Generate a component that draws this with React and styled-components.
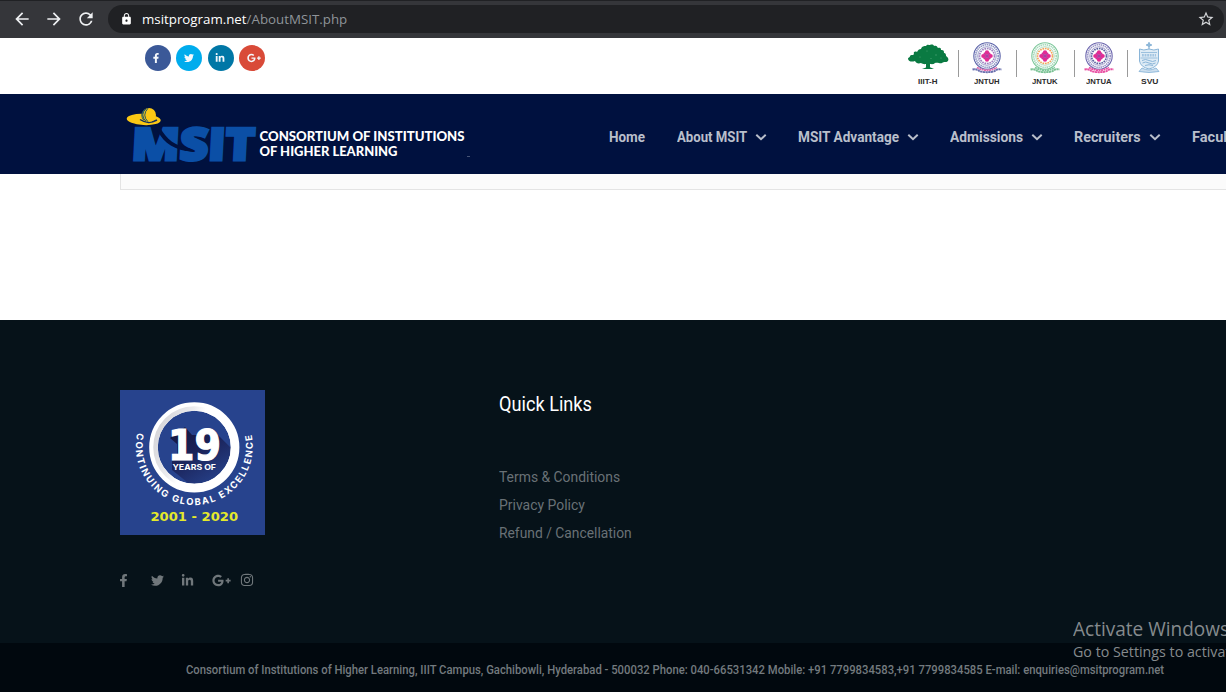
import React, { useLayoutEffect, useRef, useState } from 'react';
import styled, { createGlobalStyle } from 'styled-components';
import { FaFacebookF, FaTwitter, FaLinkedinIn, FaGooglePlusG, FaInstagram } from 'react-icons/fa';
import { MdArrowBack, MdArrowForward, MdRefresh, MdLock, MdStarBorder } from 'react-icons/md';

const GlobalStyle = createGlobalStyle`
  * { box-sizing: border-box; }
  html, body { margin: 0; overflow: hidden; }
  body { font-family: Roboto, "Liberation Sans", sans-serif; background: #fff; }
`;

const Page = styled.div`
  position: relative;
  display: flex;
  flex-direction: column;
  width: 1226px;
  height: 692px;
  overflow: hidden;
`;

/* Text set to a given measure, condensed or widened horizontally. */
const FitBox = styled.span`
  display: inline-block;
  flex: none;
  width: ${(p) => p.$w}px;
  white-space: nowrap;
`;
const FitInner = styled.span`
  display: inline-block;
  transform-origin: 0 50%;
`;
function Fit({ w, children }) {
  const ref = useRef(null);
  const [scale, setScale] = useState(1);
  useLayoutEffect(() => {
    const natural = ref.current.offsetWidth;
    if (natural) setScale(w / natural);
  }, [w]);
  return (
    <FitBox $w={w}>
      <FitInner ref={ref} style={{ transform: `scaleX(${scale})` }}>{children}</FitInner>
    </FitBox>
  );
}

/* Browser toolbar */
const Toolbar = styled.div`
  flex: none;
  display: flex;
  align-items: center;
  height: 38px;
  padding: 0 2px 1px 12px;
  background: #35363a;
  border-top: 1px solid #202124;
  color: #eef0f2;
`;
const ToolButton = styled.span`
  display: flex;
  width: 20px;
  margin-right: 12px;
  svg { width: 20px; height: 20px; }
`;
const AddressBar = styled.div`
  flex: 1;
  display: flex;
  align-items: center;
  height: 28px;
  padding: 0 9px 0 12px;
  border-radius: 14px;
  background: #202124;
  font: 13.5px/20px "Open Sans", "Noto Sans", sans-serif;
  color: #fff;
`;
const LockIcon = styled(MdLock)`
  width: 13px;
  height: 14px;
  margin: 0 9px 1px 0;
`;
const UrlPath = styled.span`
  color: #8f9499;
`;
const Star = styled(MdStarBorder)`
  width: 18px;
  height: 18px;
  margin-left: auto;
  color: #d4d6d9;
`;

/* Top strip */
const TopStrip = styled.div`
  flex: none;
  display: flex;
  justify-content: space-between;
  height: 56px;
  padding: 0 56px 0 145px;
`;
const SocialRow = styled.div`
  display: flex;
  gap: 5.4px;
  padding-top: 7px;
`;
const SocialDot = styled.span`
  display: flex;
  align-items: center;
  justify-content: center;
  width: 26px;
  height: 26px;
  padding: 0 ${(p) => p.$right || 0}px 0 ${(p) => p.$left || 0}px;
  border-radius: 50%;
  background: ${(p) => p.$bg};
  color: #f4f8fc;
  svg { display: block; width: ${(p) => p.$size}px; height: ${(p) => p.$size}px; }
`;
const Partners = styled.div`
  display: grid;
  grid-template-columns: 44px 15px 44px 14px 44px 10px 44px 7px 42px;
`;
const Partner = styled.div`
  display: flex;
  flex-direction: column;
  align-items: center;
  padding-top: 3px;
  font: bold 8px/9px "Liberation Sans", Arial, sans-serif;
  color: #2b2b2b;
  svg { display: block; width: 42px; height: 36px; }
`;
const Divider = styled.span`
  width: 1px;
  height: 27px;
  margin: 12px 0 0 ${(p) => p.$x}px;
  background: #9a9a9a;
`;

/* Navigation */
const Header = styled.header`
  flex: none;
  display: flex;
  height: 80px;
  padding-left: 120px;
  background: #00113f;
`;
const BrandSvg = styled.svg`
  flex: none;
  display: block;
  width: 360px;
  height: 80px;
`;
const Nav = styled.nav`
  display: flex;
  gap: 31px;
  height: 22px;
  margin: 32px 0 0 129px;
`;
const NavItem = styled.a`
  flex: none;
  display: flex;
  align-items: center;
  gap: 8px;
  font-size: 15.5px;
  line-height: 22px;
  font-weight: 700;
  color: #b9bfcb;
  svg { width: 12px; height: 12px; }
`;

/* Body */
const Content = styled.main`
  flex: none;
  height: 146px;
  padding-left: 120px;
`;
const PanelEnd = styled.div`
  height: 16px;
  background: #fbfbfb;
  border: solid #e4e4e4;
  border-width: 0 0 1px 1px;
`;

/* Footer */
const Footer = styled.footer`
  flex: none;
  display: flex;
  height: 323px;
  padding: 70px 0 0 120px;
  background: #061219;
`;
const AboutColumn = styled.div`
  width: 379px;
`;
const BadgeSvg = styled.svg`
  display: block;
  width: 145px;
  height: 145px;
`;
const FooterSocial = styled.div`
  display: grid;
  grid-template-columns: 34px 30px 31px 28px 14px;
  grid-template-rows: 14px;
  align-items: center;
  height: 14px;
  margin: 38px 0 0 -3px;
  color: #70777b;
  svg { display: block; }
`;
const LinksColumn = styled.div`
  color: #697176;
`;
const LinksTitle = styled.h3`
  margin: 0;
  font-size: 20.5px;
  line-height: 28px;
  font-weight: 400;
  color: #fff;
`;
const LinkList = styled.div`
  display: flex;
  flex-direction: column;
  margin-top: 45px;
`;
const FooterLink = styled.a`
  font-size: 15.5px;
  line-height: 28px;
  height: 28px;
`;
const Copyright = styled.div`
  flex: none;
  height: 49px;
  padding: 17px 0 0 185.5px;
  background: #01080e;
  font-size: 13px;
  line-height: 20px;
  font-weight: 500;
  color: #737a7e;
`;
const Watermark = styled.div`
  position: absolute;
  left: 1073px;
  top: 616px;
  font-family: "Open Sans", "Noto Sans", sans-serif;
  color: #858a8d;
  white-space: nowrap;
`;
const WatermarkTitle = styled.div`
  font-size: 19.5px;
  line-height: 26px;
`;
const WatermarkNote = styled.div`
  font-size: 14.5px;
  line-height: 20px;
`;

const Chevron = () => (
  <svg viewBox="0 0 12 12" fill="none" stroke="currentColor" strokeWidth="2">
    <path d="M1.300 3.800 6 8.200l4.700-4.400" />
  </svg>
);

const Tree = () => (
  <svg viewBox="0 0 42 36">
    <g fill="#0a7a42">
      <path d="M1 18c0-2 2-1 2-3 1-2 3 0 4-2-1-2 1-3 3-2 1-2 2-3 4-3 1-3 3-3 5-3 1-2 3-1 4-1 2-1 4 0 4 1 3-1 3 1 4 2 3-1 3 1 3 2 3 0 3 1 3 3 2 0 2 2 2 3 2 1 3 3 2 5-2 2-4 0-6 2-2 1-4-1-7 0-2 2-5 1-7 0-3 2-5 1-7 0-3 1-5 0-6-2-3 1-6 1-7-2Z" />
      <path d="m14 18 5 5v3.500l-4 1.500h12l-4-1.800V23l6-5h-7l-2 2-2-2Z" />
    </g>
    <g fill="#4aa273">
      <circle cx="13" cy="16" r=".6" /><circle cx="20" cy="10" r=".6" /><circle cx="29" cy="14" r=".7" />
      <circle cx="24" cy="17.500" r=".6" /><circle cx="34" cy="17" r=".6" />
    </g>
  </svg>
);

const Emblem = ({ outer, inner, band, ribbon }) => (
  <svg viewBox="0 0 42 36">
    <g fill="none">
      <circle cx="21" cy="15" r="13.200" stroke={outer} strokeWidth="1.100" />
      <circle cx="21" cy="15" r="11.300" stroke={outer} strokeWidth="1.700" strokeDasharray="1.400 .7" opacity=".7" />
      <circle cx="21" cy="15" r="9.300" stroke={outer} strokeWidth="1" opacity=".6" />
      <circle cx="21" cy="15" r="7.500" stroke={inner} strokeWidth="1.700" strokeDasharray="1.700 .8" opacity=".85" />
      <path d="M11 26.500q10 5.500 20 0" stroke={ribbon} strokeWidth="1.900" strokeDasharray="2 .5" />
      <path d="M6.500 28.500q4-1 7 1.700 7.500 2 15 0 3-2.700 7-1.700" stroke={band} strokeWidth="1.900" strokeDasharray="2.300 .4" />
    </g>
    <g fill="#e32b94">
      <circle cx="21" cy="11.300" r="2.100" /><circle cx="21" cy="18.700" r="2.100" />
      <circle cx="17.300" cy="15" r="2.100" /><circle cx="24.700" cy="15" r="2.100" />
      <circle cx="18.800" cy="12.800" r="1.300" /><circle cx="23.200" cy="12.800" r="1.300" />
      <circle cx="18.800" cy="17.200" r="1.300" /><circle cx="23.200" cy="17.200" r="1.300" />
    </g>
    <circle cx="21" cy="15" r="2.100" fill="#c32f98" />
    <path d="m18 12 6 6m0-6-6 6" stroke="#9b4ba8" strokeWidth=".7" />
  </svg>
);

const Crest = () => (
  <svg viewBox="0 0 42 36" fill="none" stroke="#8ab5d8">
    <path d="M21 1v7m-3-4h6" strokeWidth="1.300" />
    <circle cx="21" cy="4" r="1.500" strokeWidth="1" />
    <path d="M11.500 8q4 2 9.500 0 5 2 9.500 0v12q-1 6-9.500 8-8.500-2-9.500-8Z" fill="#deebf5" strokeWidth="1" />
    <path d="M13 11.500h16M12.500 17h17" strokeWidth=".8" />
    <path d="M14 14.300h14" strokeWidth="2.500" strokeDasharray="1.800 .8" opacity=".7" />
    <path d="M14 19.500q3.500-2 7 0t7 0M14.500 22q3-2 6.500 0t6.500 0M17 24.500q4-1.500 8 0" strokeWidth="1" />
    <path d="M11 30.500 14 27q7 4 14 0l3 3.500q-10 2-20 0Z" fill="#cddfee" strokeWidth=".9" />
  </svg>
);

const Brand = () => (
  <BrandSvg viewBox="0 0 360 80">
    <text
      transform="translate(11 66) skewX(-3)"
      fontFamily="Open Sans, sans-serif"
      fontWeight="800"
      fontSize="44.500"
      fill="#0b4fa6"
      stroke="#0b4fa6"
      strokeWidth="3"
      textLength="123"
      lengthAdjust="spacingAndGlyphs"
    >
      MSIT
    </text>
    <path d="M36 33c5 13 14 21 30 24l4-2.500c-14-2-24-9-30-21.500Z" fill="#00113f" />
    <ellipse cx="23.700" cy="25.500" rx="17" ry="5.600" fill="#fbc814" transform="rotate(3 23.700 25.500)" />
    <path d="M20 25.500q8 5.500 17 .5" fill="none" stroke="#17305a" strokeWidth="1.500" />
    <circle cx="29" cy="21" r="7" fill="#fbc814" />
    <g fill="none" stroke="#1d5468" strokeWidth="1">
      <path d="M26 14.700q-6.500 6 0 12.800M28 14.200q-6.500 7 0 13.600M24.200 15.700q-4.500 5-.5 10.500" />
    </g>
    <g fontFamily="Lato, sans-serif" fontWeight="900" fontSize="12.500" fill="#fff">
      <text x="139.500" y="46.600" textLength="205" lengthAdjust="spacingAndGlyphs">CONSORTIUM OF INSTITUTIONS</text>
      <text x="139.500" y="62.200" textLength="138" lengthAdjust="spacingAndGlyphs">OF HIGHER LEARNING</text>
    </g>
    <path d="M347 62.500h3" stroke="#64708c" strokeWidth=".7" />
  </BrandSvg>
);

const Badge = () => (
  <BadgeSvg viewBox="0 0 145 145">
    <defs>
      <linearGradient id="ring" x1="0" y1=".2" x2="1" y2=".6">
        <stop offset="0" stopColor="#d4d4d8" />
        <stop offset=".35" stopColor="#ebebee" />
        <stop offset=".5" stopColor="#fff" />
      </linearGradient>
      <linearGradient id="shade" x1=".1" y1="0" x2=".75" y2="1">
        <stop offset="0" stopColor="#15183f" />
        <stop offset=".4" stopColor="#1a2156" />
        <stop offset="1" stopColor="#27438d" />
      </linearGradient>
      <clipPath id="disc"><circle cx="74.300" cy="57.300" r="37" /></clipPath>
      <path id="arc" d="M17.400 43A58.500 58.500 0 1 0 131.200 43" />
    </defs>
    <path d="M0 0h145v145H0Z" fill="#27438d" />
    <path d="M50 48 65 37l7 8 12 0 10-4 18 18v8L90 96H72L52 80v-9l5-2V54Z" fill="url(#shade)" clipPath="url(#disc)" />
    <circle cx="74.300" cy="57.300" r="40.800" fill="none" stroke="#fff" strokeWidth="8.600" />
    <circle cx="74.300" cy="57.300" r="38.800" fill="none" stroke="url(#ring)" strokeWidth="4.500" />
    <g fill="#fff">
      <text x="48" y="70" fontFamily="DejaVu Sans, sans-serif" fontWeight="700" fontSize="42" textLength="53" lengthAdjust="spacingAndGlyphs" stroke="#fff" strokeWidth="1.200">19</text>
      <text x="52.500" y="80" fontFamily="Inter, sans-serif" fontWeight="700" fontSize="8" textLength="43.500" lengthAdjust="spacingAndGlyphs">YEARS OF</text>
      <text fontFamily="Inter, sans-serif" fontWeight="700" fontSize="9.400">
        <textPath href="#arc" textLength="209" lengthAdjust="spacing">CONTINUING GLOBAL EXCELLENCE</textPath>
      </text>
    </g>
    <text x="30.500" y="131" fontFamily="DejaVu Sans, sans-serif" fontWeight="700" fontSize="13" fill="#e4e92b" textLength="87.500" lengthAdjust="spacingAndGlyphs">2001 - 2020</text>
  </BadgeSvg>
);

const navItems = [
  { label: 'Home', w: 36.5 },
  { label: 'About MSIT', w: 70.5, menu: true },
  { label: 'MSIT Advantage', w: 101, menu: true },
  { label: 'Admissions', w: 73, menu: true },
  { label: 'Recruiters', w: 66.5, menu: true },
  { label: 'Faculty', w: 47 },
];

const footerLinks = [
  { label: 'Terms & Conditions', w: 121 },
  { label: 'Privacy Policy', w: 85.5 },
  { label: 'Refund / Cancellation', w: 133 },
];

export default function App() {
  return (
    <Page>
      <GlobalStyle />
      <Toolbar>
        <ToolButton><MdArrowBack /></ToolButton>
        <ToolButton><MdArrowForward /></ToolButton>
        <ToolButton><MdRefresh /></ToolButton>
        <AddressBar>
          <LockIcon />
          <Fit w={205}>msitprogram.net<UrlPath>/AboutMSIT.php</UrlPath></Fit>
          <Star />
        </AddressBar>
      </Toolbar>

      <TopStrip>
        <SocialRow>
          <SocialDot $bg="#3b5998" $size={10} $right={5}><FaFacebookF /></SocialDot>
          <SocialDot $bg="#00aced" $size={10} $right={1}><FaTwitter /></SocialDot>
          <SocialDot $bg="#0077a6" $size={10} $right={2}><FaLinkedinIn /></SocialDot>
          <SocialDot $bg="#d94a38" $size={14} $left={3}><FaGooglePlusG /></SocialDot>
        </SocialRow>
        <Partners>
          <Partner><Tree /><Fit w={20}>IIIT-H</Fit></Partner>
          <Divider $x={8} />
          <Partner><Emblem outer="#5a62a8" inner="#8d6bb5" band="#6a6fae" ribbon="#e067ac" /><Fit w={26}>JNTUH</Fit></Partner>
          <Divider $x={7} />
          <Partner><Emblem outer="#7cc79a" inner="#f0953f" band="#79c193" ribbon="#7cc79a" /><Fit w={26}>JNTUK</Fit></Partner>
          <Divider $x={7} />
          <Partner><Emblem outer="#6b65ad" inner="#40478f" band="#e84fa2" ribbon="#e84fa2" /><Fit w={26}>JNTUA</Fit></Partner>
          <Divider $x={6} />
          <Partner><Crest /><Fit w={17}>SVU</Fit></Partner>
        </Partners>
      </TopStrip>

      <Header>
        <Brand />
        <Nav>
          {navItems.map((n) => (
            <NavItem key={n.label}>
              <Fit w={n.w}>{n.label}</Fit>
              {n.menu && <Chevron />}
            </NavItem>
          ))}
        </Nav>
      </Header>

      <Content><PanelEnd /></Content>

      <Footer>
        <AboutColumn>
          <Badge />
          <FooterSocial>
            <FaFacebookF size={13} />
            <FaTwitter size={13} />
            <FaLinkedinIn size={13} />
            <FaGooglePlusG size={19} />
            <FaInstagram size={14} />
          </FooterSocial>
        </AboutColumn>
        <LinksColumn>
          <LinksTitle><Fit w={93}>Quick Links</Fit></LinksTitle>
          <LinkList>
            {footerLinks.map((l) => (
              <FooterLink key={l.label}><Fit w={l.w}>{l.label}</Fit></FooterLink>
            ))}
          </LinkList>
        </LinksColumn>
      </Footer>
      <Copyright>
        <Fit w={978}>
          Consortium of Institutions of Higher Learning, IIIT Campus, Gachibowli, Hyderabad - 500032 Phone: 040-66531342 Mobile: +91 7799834583,+91 7799834585 E-mail: enquiries@msitprogram.net
        </Fit>
      </Copyright>

      <Watermark>
        <WatermarkTitle><Fit w={156}>Activate Windows</Fit></WatermarkTitle>
        <WatermarkNote><Fit w={234}>Go to Settings to activate Windows.</Fit></WatermarkNote>
      </Watermark>
    </Page>
  );
}
